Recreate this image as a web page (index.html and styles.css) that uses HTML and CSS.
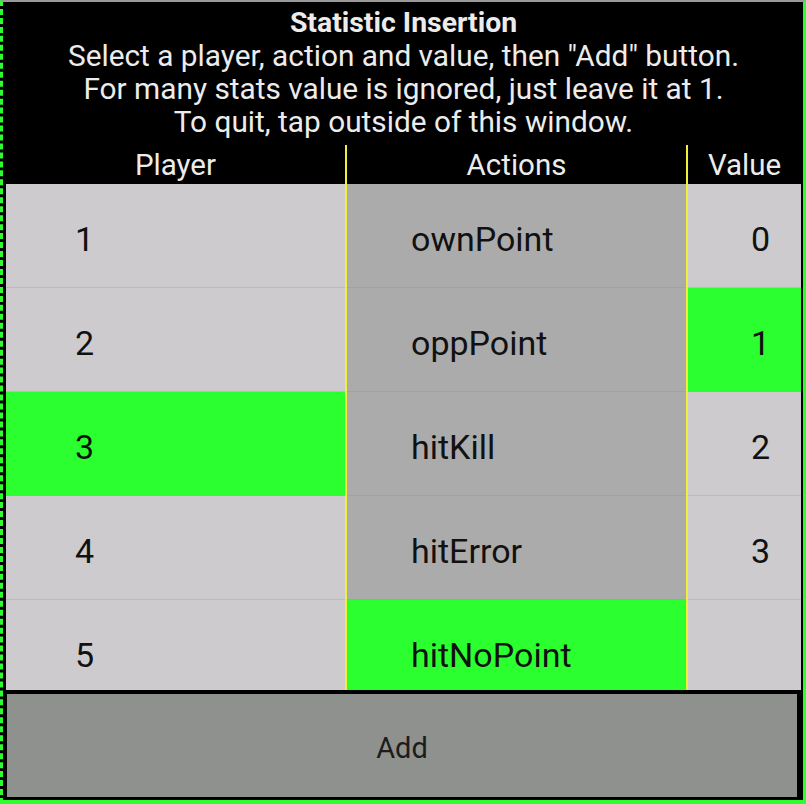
FILE: index.html
```html
<!DOCTYPE html>
<html>
<head>
<meta charset="utf-8">
<link rel="stylesheet" href="styles.css">
</head>
<body>
<div class="device">
  <div class="intro">
    <div class="title">Statistic Insertion</div>
    <div class="line">Select a player, action and value, then "Add" button.</div>
    <div class="line">For many stats value is ignored, just leave it at 1.</div>
    <div class="line">To quit, tap outside of this window.</div>
  </div>
  <div class="table">
    <div class="col col-player">
      <div class="head">Player</div>
      <div class="cell">1</div>
      <div class="cell">2</div>
      <div class="cell sel">3</div>
      <div class="cell">4</div>
      <div class="cell">5</div>
    </div>
    <div class="col col-action">
      <div class="head">Actions</div>
      <div class="cell">ownPoint</div>
      <div class="cell">oppPoint</div>
      <div class="cell">hitKill</div>
      <div class="cell">hitError</div>
      <div class="cell sel">hitNoPoint</div>
    </div>
    <div class="col col-value">
      <div class="head">Value</div>
      <div class="cell">0</div>
      <div class="cell sel">1</div>
      <div class="cell">2</div>
      <div class="cell">3</div>
      <div class="cell"></div>
    </div>
  </div>
  <div class="actions">
    <div class="add">Add</div>
  </div>
</div>
</body>
</html>
```

FILE: styles.css
```css
* { box-sizing: border-box; }
html, body { margin: 0; padding: 0; background: #ffffff; }
body { font-family: Roboto, "Liberation Sans", sans-serif; }

.device {
  width: 806px;
  height: 804px;
  background: #000000;
  border-top: 2px solid #9a9a9a;
  border-left: 3px dashed #2bff2f;
  border-right: 3px solid #2bff2f;
  border-bottom: 4px solid #2bff2f;
  padding: 0 2px 0 3px;
  display: flex;
  flex-direction: column;
  overflow: hidden;
}

.intro {
  height: 143px;
  padding-top: 4px;
  color: #ececec;
  text-align: center;
  font-size: 29.8px;
  line-height: 33px;
}
.title { font-weight: bold; font-size: 28.4px; }

.table {
  display: flex;
  height: 545px;
  flex: none;
}
.col {
  display: flex;
  flex-direction: column;
  overflow: hidden;
}
.col-player { width: 339px; background: #cdcbce; }
.col-action { width: 341px; background: #ababab; border-left: 2px solid #f2ee3a; }
.col-value { width: 115px; background: #cdcbce; border-left: 2px solid #f2ee3a; }

.head {
  flex: none;
  height: 39px;
  background: #000000;
  color: #ececec;
  font-size: 29.5px;
  line-height: 41px;
  text-align: center;
}

.cell {
  flex: none;
  height: 104px;
  display: flex;
  align-items: center;
  padding-top: 6px;
  font-size: 34px;
  color: #111111;
  border-bottom: 1px solid #bcbabd;
}
.col-action .cell { border-bottom-color: #a2a2a2; }
.col-player .cell { padding-left: 69px; }
.col-action .cell { padding-left: 64px; }
.col-value .cell { justify-content: flex-end; padding-right: 31px; }
.cell.sel { background: #2bff2f; border-bottom-color: #2bff2f; }

.actions {
  flex: none;
  height: 110px;
  padding: 4px 4px 3px 1px;
}
.add {
  height: 103px;
  background: #8f918e;
  display: flex;
  align-items: center;
  justify-content: center;
  padding-top: 4px;
  font-size: 29px;
  color: #1c1c1c;
}
```
